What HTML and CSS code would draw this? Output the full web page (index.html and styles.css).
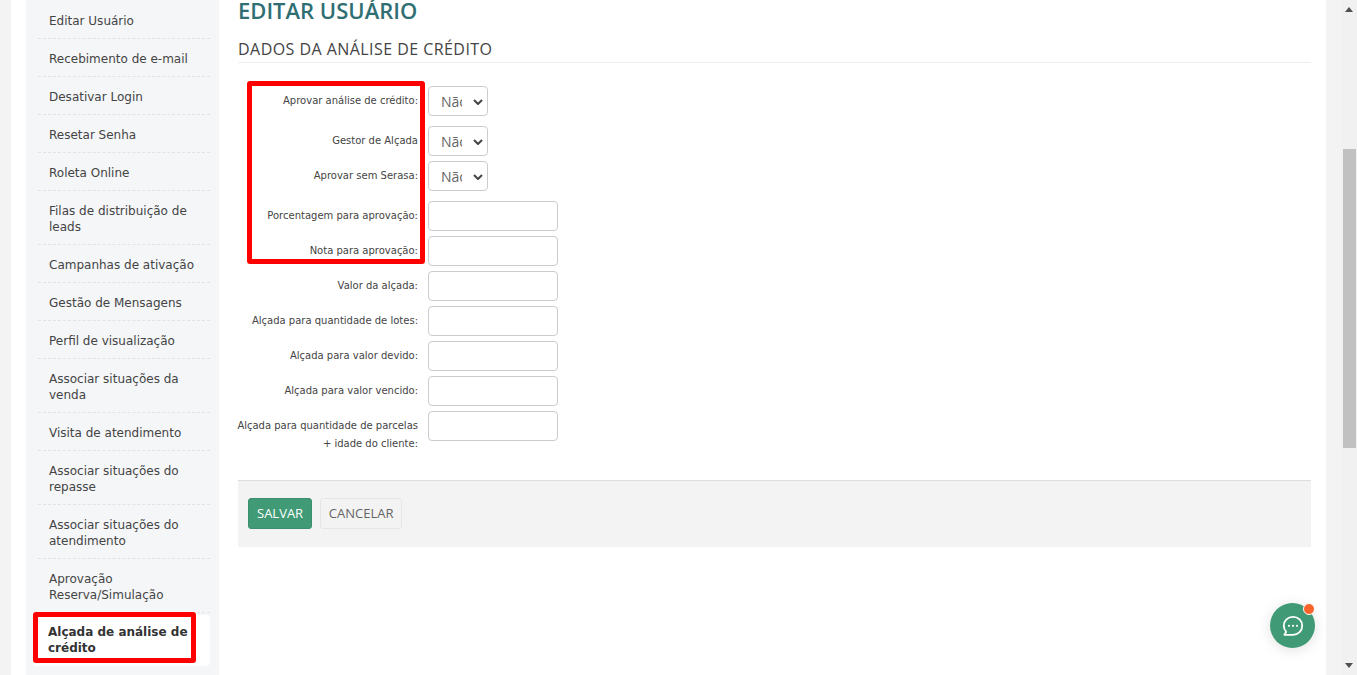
FILE: index.html
```html
<!DOCTYPE html>
<html lang="pt-BR">
<head>
<meta charset="utf-8">
<title>Editar Usuário</title>
<link rel="stylesheet" href="styles.css">
</head>
<body>
<div class="shell">
  <div class="page">
    <aside class="sidebar">
      <ul class="menu">
        <li class="menu-item">Editar Usuário</li>
        <li class="menu-item">Recebimento de e-mail</li>
        <li class="menu-item">Desativar Login</li>
        <li class="menu-item">Resetar Senha</li>
        <li class="menu-item">Roleta Online</li>
        <li class="menu-item">Filas de distribuição de leads</li>
        <li class="menu-item">Campanhas de ativação</li>
        <li class="menu-item">Gestão de Mensagens</li>
        <li class="menu-item">Perfil de visualização</li>
        <li class="menu-item">Associar situações da venda</li>
        <li class="menu-item">Visita de atendimento</li>
        <li class="menu-item">Associar situações do repasse</li>
        <li class="menu-item">Associar situações do atendimento</li>
        <li class="menu-item">Aprovação Reserva/Simulação</li>
        <li class="menu-item active">Alçada de análise de crédito<span class="mark mark-menu"></span></li>
      </ul>
    </aside>
    <main class="content">
      <h1 class="title">EDITAR USUÁRIO</h1>
      <h2 class="subtitle">DADOS DA ANÁLISE DE CRÉDITO</h2>
      <form class="form">
        <span class="mark mark-form"></span>
        <div class="row gap-10"><label class="label">Aprovar análise de crédito:</label><select class="select"><option>Não</option></select></div>
        <div class="row gap-5"><label class="label">Gestor de Alçada</label><select class="select"><option>Não</option></select></div>
        <div class="row gap-10"><label class="label">Aprovar sem Serasa:</label><select class="select"><option>Não</option></select></div>
        <div class="row gap-5"><label class="label">Porcentagem para aprovação:</label><input class="input" type="text"></div>
        <div class="row gap-5"><label class="label">Nota para aprovação:</label><input class="input" type="text"></div>
        <div class="row gap-5"><label class="label">Valor da alçada:</label><input class="input" type="text"></div>
        <div class="row gap-5"><label class="label">Alçada para quantidade de lotes:</label><input class="input" type="text"></div>
        <div class="row gap-5"><label class="label">Alçada para valor devido:</label><input class="input" type="text"></div>
        <div class="row gap-5"><label class="label">Alçada para valor vencido:</label><input class="input" type="text"></div>
        <div class="row"><label class="label">Alçada para quantidade de parcelas + idade do cliente:</label><input class="input" type="text"></div>
      </form>
      <div class="actions">
        <button class="btn btn-save" type="button">SALVAR</button>
        <button class="btn btn-cancel" type="button">CANCELAR</button>
      </div>
    </main>
  </div>
  <div class="scrollbar">
    <svg class="arrow" width="8" height="5" viewBox="0 0 8 5"><path d="M4 0 8 5H0z" fill="#505050"/></svg>
    <div class="track"><div class="thumb"></div></div>
    <svg class="arrow" width="8" height="5" viewBox="0 0 8 5"><path d="M0 0h8L4 5z" fill="#505050"/></svg>
  </div>
</div>
<button class="chat" type="button" aria-label="Chat">
  <svg width="24" height="24" viewBox="0 0 24 24" fill="none">
    <path d="M12 2.800c5.300 0 9.200 3.900 9.200 9s-3.900 9-9.200 9H3.400l1.800-2.900C3.700 16.300 2.800 14.200 2.800 11.800c0-5.100 3.900-9 9.200-9z" stroke="#fff" stroke-width="1.800" stroke-linejoin="round"/>
    <circle cx="8" cy="11.800" r="1.100" fill="#fff"/><circle cx="12" cy="11.800" r="1.100" fill="#fff"/><circle cx="16" cy="11.800" r="1.100" fill="#fff"/>
  </svg>
  <span class="chat-dot"></span>
</button>
</body>
</html>
```
FILE: styles.css
```css
* { box-sizing: border-box; }
html, body { margin: 0; height: 675px; overflow: hidden; background: #f3f3f3; }
body { font-family: "DejaVu Sans", sans-serif; color: #444; }
.shell { display: flex; height: 675px; padding-left: 11px; }
.page { flex: 0 0 1315px; height: 675px; background: #fff; display: flex; padding-left: 15px; overflow: hidden; }
.sidebar { flex: 0 0 193px; background: #f5f6f8; padding: 1px 9px 0 12px; }
.menu { list-style: none; margin: 0; padding: 0; }
.menu-item { position: relative; padding: 12px 11px 9px; font-size: 12px; line-height: 16px; border-bottom: 1px dashed #e3e3e3; color: #444; }
.menu-item.active { margin: 2px 0 0 -5px; padding: 9px 14px 10px 15px; background: #fff; border-bottom: 0; border-radius: 4px; font-weight: 700; color: #333; }
.content { flex: 0 0 1073px; margin-left: 19px; }
.title { margin: -1px 0 0; font: 600 22px/22px "Open Sans", sans-serif; color: #2f6f73; }
.subtitle { margin: 18px 0 0; padding-bottom: 3px; font: 400 16px/20px "Open Sans", sans-serif; letter-spacing: .45px; color: #444; border-bottom: 1px solid #eee; }
.form { position: relative; padding-top: 23px; }
.row { display: flex; gap: 10px; align-items: flex-start; }
.gap-5 { margin-bottom: 5px; }
.gap-10 { margin-bottom: 10px; }
.label { flex: 0 0 182px; margin-left: -2px; padding-top: 6px; font-size: 10px; line-height: 18px; text-align: right; color: #444; }
.select { appearance: none; width: 60px; height: 30px; padding: 0 25px 0 12px; background: #fff url("data:image/svg+xml,%3Csvg xmlns='http://www.w3.org/2000/svg' width='10' height='6'%3E%3Cpath d='M1 1l4 4 4-4' fill='none' stroke='%23444' stroke-width='2'/%3E%3C/svg%3E") no-repeat 44px 12px; border: 1px solid #ccc; border-radius: 4px; font: 14px "Open Sans", sans-serif; color: #666; }
.input { width: 130px; height: 30px; background: #fff; border: 1px solid #ccc; border-radius: 4px; }
.actions { display: flex; gap: 8px; height: 67px; margin-top: 27px; padding: 17px 10px; background: #f3f3f3; border-top: 1px solid #ddd; align-items: flex-start; }
.btn { height: 31px; padding: 0 8px 1px; border-radius: 3px; font: 400 13px "Open Sans", sans-serif; }
.btn-save { background: #409a75; border: 1px solid #3b8f6c; color: #fff; }
.btn-cancel { width: 82px; padding: 0 0 1px; background: #f3f3f3; border: 1px solid #e6e6e6; color: #666; }
.mark { position: absolute; border: 5px solid #f00; border-radius: 3px; pointer-events: none; }
.mark-menu { left: 0; top: -3px; width: 163px; height: 51px; }
.mark-form { left: 9px; top: 18px; width: 178px; height: 183px; }
.scrollbar { flex: 0 0 16px; margin-left: 15px; height: 675px; background: #f1f1f1; display: flex; flex-direction: column; align-items: center; padding: 7px 0; }
.track { flex: 1; width: 100%; padding: 137px 1px 0 2px; }
.thumb { height: 299px; background: #c1c1c1; }
.chat { position: fixed; left: 1270px; top: 603px; width: 45px; height: 45px; padding: 0; border: 0; border-radius: 50%; background: #409a75; box-shadow: 0 2px 14px rgba(0,0,0,.12); display: flex; align-items: center; justify-content: center; }
.chat-dot { position: absolute; left: 33px; top: 0; width: 10px; height: 10px; border-radius: 50%; background: #f9642b; border: 1px solid #fff; box-sizing: content-box; }
```
